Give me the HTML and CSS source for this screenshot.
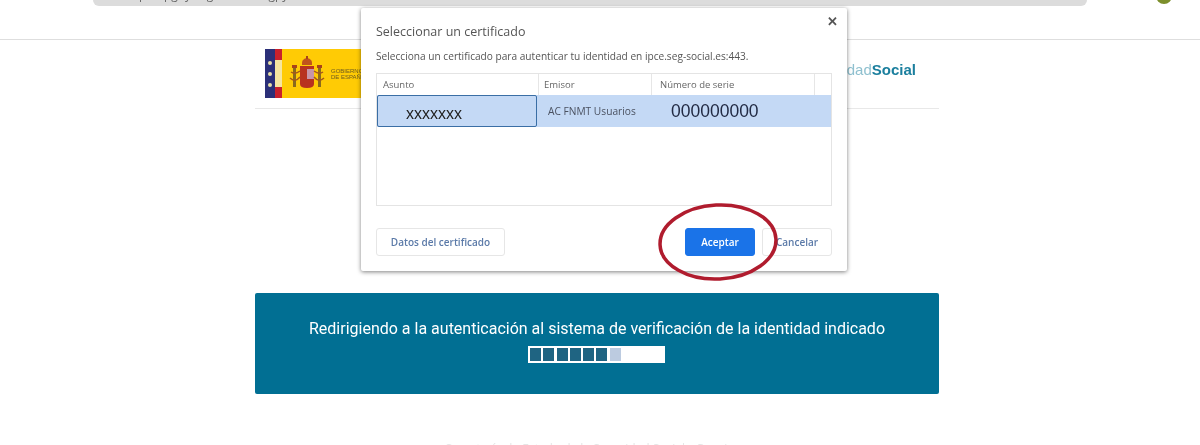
FILE: index.html
```html
<!DOCTYPE html>
<html lang="es">
<head>
    <meta charset="UTF-8">
    <meta name="viewport" content="width=device-width, initial-scale=1.0">
    <title>Seleccionar un certificado</title>
    <link rel="stylesheet" href="styles.css">
</head>
<body>
    <div class="topbar">
        <div class="urlbar"><span class="url">https://pgoy.seg-social.es/gpy</span></div>
        <div class="avatar"></div>
    </div>

    <div class="container">
        <div class="header">
            <div class="logo">
                <div class="flag-band">
                    <span class="dot"></span>
                    <span class="dot"></span>
                    <span class="dot"></span>
                </div>
                <div class="flag-red"></div>
                <div class="logo-yellow">
                    <svg class="shield" width="36" height="36" viewBox="0 0 36 36">
                        <path d="M13 9 Q12 3 18 2 Q24 3 23 9 Z" fill="#c0531c"/>
                        <rect x="17" y="0" width="2" height="3" fill="#a8431a"/>
                        <path d="M11 10 H25 V28 Q25 32 18 32 Q11 32 11 28 Z" fill="#b8321f"/>
                        <rect x="18" y="13" width="7" height="10" fill="#c795a8"/>
                        <rect x="4" y="12" width="3" height="19" fill="#8a6a1e"/>
                        <rect x="29" y="12" width="3" height="19" fill="#8a6a1e"/>
                        <rect x="3" y="9" width="5" height="3" fill="#a8431a"/>
                        <rect x="28" y="9" width="5" height="3" fill="#a8431a"/>
                        <path d="M1 22 Q6 27 11 21 M35 22 Q30 27 25 21 M2 16 Q6 19 11 15 M34 16 Q30 19 25 15" stroke="#a4571c" stroke-width="1.5" fill="none"/>
                    </svg>
                    <div class="logo-text">GOBIERNO<br>DE ESPAÑA</div>
                </div>
            </div>
            <div class="brand">Seguridad<strong>Social</strong></div>
        </div>

        <div class="banner">
            <div class="banner-text">Redirigiendo a la autenticación al sistema de verificación de la identidad indicado</div>
            <div class="progress">
                <span class="step"></span>
                <span class="step"></span>
                <span class="step"></span>
                <span class="step"></span>
                <span class="step"></span>
                <span class="step"></span>
                <span class="step step-light"></span>
            </div>
        </div>
    </div>

    <div class="dialog">
        <div class="close">&#10005;</div>
        <h1>Seleccionar un certificado</h1>
        <p>Selecciona un certificado para autenticar tu identidad en ipce.seg-social.es:443.</p>
        <div class="table">
            <div class="table-head">
                <div class="col col-subject">Asunto</div>
                <div class="col col-issuer">Emisor</div>
                <div class="col col-serial">Número de serie</div>
            </div>
            <div class="table-row">
                <div class="col col-subject cell-focus">xxxxxxx</div>
                <div class="col col-issuer">AC FNMT Usuarios</div>
                <div class="col col-serial cell-number">000000000</div>
            </div>
        </div>
        <div class="actions">
            <button class="btn">Datos del certificado</button>
            <div class="actions-right">
                <button class="btn btn-primary">Aceptar</button>
                <button class="btn btn-cancel">Cancelar</button>
            </div>
        </div>
    </div>

    <svg class="circle" width="130" height="86" viewBox="0 0 130 86">
        <ellipse cx="65" cy="43" rx="58" ry="37" fill="none" stroke="#b01c2e" stroke-width="3.5" transform="rotate(-3 65 43)"/>
    </svg>

    <div class="cutoff">Secretaría de Estado de la Seguridad Social y Pensiones</div>
</body>
</html>
```

FILE: styles.css
```css
html, body {
    margin: 0;
    height: 445px;
    overflow: hidden;
}
body {
    position: relative;
    background-color: white;
    font-family: "Open Sans", Arial, sans-serif;
    color: #444;
    filter: blur(0.4px);
}
.topbar {
    height: 39px;
    border-bottom: 1px solid #dedede;
    display: flex;
    overflow: hidden;
}
.urlbar {
    margin-left: 93px;
    width: 994px;
    height: 6px;
    background-color: #dcdcdc;
    border-radius: 0 0 9px 9px;
    overflow: hidden;
}
.url {
    display: block;
    margin: -12px 0 0 30px;
    font-size: 12px;
    line-height: 14px;
    color: #666;
}
.avatar {
    width: 16px;
    height: 16px;
    margin: -12px 0 0 69px;
    background-color: #7c8f2c;
    border-radius: 50%;
}
.container {
    width: 684px;
    margin-left: 255px;
}
.header {
    height: 69px;
    border-bottom: 1px solid #e8e8e8;
    display: flex;
    justify-content: space-between;
    box-sizing: border-box;
    padding-top: 9px;
}
.logo {
    display: flex;
    margin-left: 10px;
    width: 110px;
    height: 49px;
    background-color: #ffcb05;
}
.flag-band {
    width: 10px;
    background-color: #2b2f78;
    display: flex;
    flex-direction: column;
    justify-content: center;
    align-items: center;
    gap: 7px;
}
.dot {
    width: 4px;
    height: 4px;
    border-radius: 50%;
    background-color: #e8dfa8;
}
.flag-red {
    width: 7px;
    background: linear-gradient(#c8202c 0 23%, #f6e6a0 23% 77%, #c8202c 77%);
}
.logo-yellow {
    flex: 1;
    display: flex;
    align-items: center;
    padding-left: 7px;
    gap: 6px;
}
.logo-text {
    font-family: "Liberation Sans", Arial, sans-serif;
    font-size: 6px;
    line-height: 6px;
    color: #6b5a20;
}
.brand {
    margin: 12px 23px 0 0;
    font-family: "Liberation Sans", Arial, sans-serif;
    font-size: 15px;
    line-height: 18px;
    color: #8fc0cf;
}
.brand strong {
    color: #1b7f9e;
}
.banner {
    margin-top: 184px;
    height: 101px;
    background-color: #016f93;
    border-radius: 2px;
    color: white;
    box-sizing: border-box;
    padding-top: 26px;
    text-align: center;
}
.banner-text {
    font-family: Roboto, Arial, sans-serif;
    font-size: 16px;
    line-height: 20px;
}
.progress {
    display: flex;
    gap: 2.3px;
    width: 137px;
    height: 17px;
    box-sizing: border-box;
    padding: 2px;
    margin: 7px 0 0 273px;
    background-color: white;
}
.step {
    width: 11px;
    background-color: #1f6482;
}
.step-light {
    background-color: #bccbe0;
}
.dialog {
    position: absolute;
    left: 361px;
    top: 8px;
    width: 486px;
    height: 263px;
    box-sizing: border-box;
    padding: 15px;
    background-color: white;
    border-radius: 2px;
    box-shadow: 0 1px 4px rgba(0, 0, 0, 0.5);
}
.dialog h1 {
    margin: 0;
    font-size: 12.5px;
    line-height: 18px;
    font-weight: normal;
    color: #555;
}
.dialog p {
    margin: 9px 0 0;
    font-size: 10.15px;
    line-height: 13px;
    color: #555;
}
.close {
    position: absolute;
    right: 9px;
    top: 4px;
    font-size: 13px;
    font-weight: bold;
    color: #555;
}
.table {
    margin-top: 10px;
    width: 456px;
    height: 133px;
    box-sizing: border-box;
    border: 1px solid #e4e4e4;
    font-size: 9.5px;
}
.table-head, .table-row {
    display: flex;
}
.table-head {
    height: 21px;
    align-items: center;
    color: #666;
}
.table-head .col {
    border-right: 1px solid #e6e6e6;
    line-height: 21px;
}
.table-row {
    height: 32px;
    align-items: center;
    background-color: #c4d9f5;
    color: #4a5160;
}
.col-subject {
    width: 162px;
    box-sizing: border-box;
    padding-left: 6px;
}
.col-issuer {
    width: 113px;
    box-sizing: border-box;
    padding-left: 5px;
}
.col-serial {
    width: 163px;
    box-sizing: border-box;
    padding-left: 8px;
}
.cell-focus {
    width: 160px;
    height: 32px;
    margin-right: 2px;
    line-height: 36px;
    padding-left: 28px;
    background-color: #c4d9f5;
    border: 1px solid #3a6ea5;
    border-radius: 2px;
    font-family: Arial, "Liberation Sans", sans-serif;
    font-size: 16px;
    color: #222;
}
.table-row .col-issuer {
    padding-left: 9px;
    font-size: 10.2px;
}
.table-row .cell-number {
    padding-left: 19px;
    font-family: Arial, "Liberation Sans", sans-serif;
    font-size: 17.5px;
    color: #222b44;
}
.actions {
    display: flex;
    justify-content: space-between;
    margin-top: 22px;
}
.actions-right {
    display: flex;
    gap: 7px;
}
.btn {
    height: 28px;
    width: 129px;
    padding: 0;
    background-color: white;
    border: 1px solid #e6e6e6;
    border-radius: 3px;
    font-family: "Open Sans", Arial, sans-serif;
    font-size: 10px;
    font-weight: 600;
    color: #5b7aa8;
}
.btn-primary {
    width: 70px;
    background-color: #1a73e8;
    border-color: #1a73e8;
    color: white;
}
.btn-cancel {
    width: 70px;
}
.circle {
    position: absolute;
    left: 653px;
    top: 199px;
}
.cutoff {
    position: absolute;
    left: 430px;
    top: 440px;
    width: 340px;
    text-align: center;
    font-size: 12px;
    color: #e6e6e6;
}
```
